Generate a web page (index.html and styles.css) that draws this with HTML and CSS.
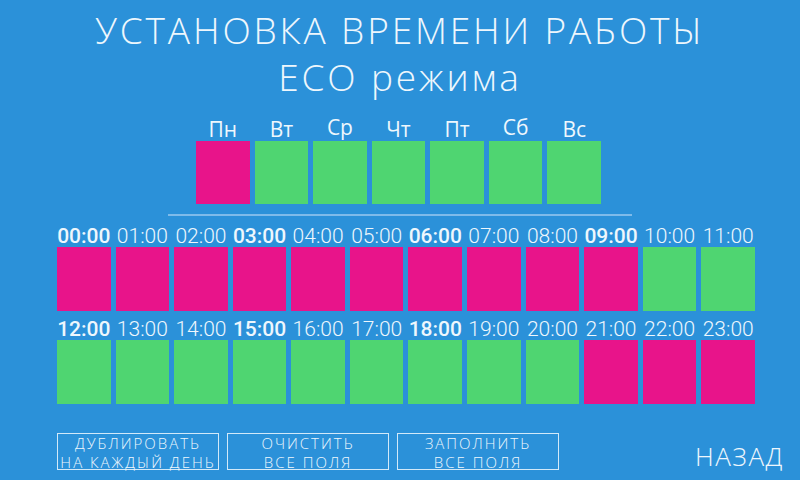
FILE: index.html
```html
<!DOCTYPE html>
<html lang="ru">
  <head>
    <meta charset="UTF-8" />
    <meta name="viewport" content="width=device-width, initial-scale=1.0" />
    <title>ECO режим</title>
    <link rel="stylesheet" href="styles.css">
  </head>
  <body>
    <div class="screen">
      <h1 class="title">
        <span>УСТАНОВКА ВРЕМЕНИ РАБОТЫ</span>
        <span>ECO режима</span>
      </h1>

      <div class="days">
        <div class="day"><span class="dayName">Пн</span><div class="cell off"></div></div>
        <div class="day"><span class="dayName">Вт</span><div class="cell on"></div></div>
        <div class="day"><span class="dayName up">Ср</span><div class="cell on"></div></div>
        <div class="day"><span class="dayName">Чт</span><div class="cell on"></div></div>
        <div class="day"><span class="dayName">Пт</span><div class="cell on"></div></div>
        <div class="day"><span class="dayName up">Сб</span><div class="cell on"></div></div>
        <div class="day"><span class="dayName">Вс</span><div class="cell on"></div></div>
      </div>

      <div class="divider"></div>

      <div class="hours" id="hours"></div>

      <div class="actions">
        <button class="btn">ДУБЛИРОВАТЬ<br>НА КАЖДЫЙ ДЕНЬ</button>
        <button class="btn">ОЧИСТИТЬ<br>ВСЕ ПОЛЯ</button>
        <button class="btn">ЗАПОЛНИТЬ<br>ВСЕ ПОЛЯ</button>
        <button class="back">НАЗАД</button>
      </div>
    </div>

    <script>
      let hours = document.getElementById("hours");
      // 1 = работает (зелёный), 0 = выключено
      let state = [0,0,0,0,0,0,0,0,0,0,1,1, 1,1,1,1,1,1,1,1,1,0,0,0];

      for (let row = 0; row < 2; row++) {
        let grid = document.createElement("div");
        grid.className = "hourRow";
        let labels = "";
        let cells = "";
        for (let i = 0; i < 12; i++) {
          let h = row * 12 + i;
          let txt = (h < 10 ? "0" : "") + h + ":00";
          let cls = h % 3 == 0 && h <= 18 ? "hourName bold" : "hourName";
          labels += '<span class="' + cls + '">' + txt + "</span>";
          cells += '<div class="cell ' + (state[h] ? "on" : "off") + '"></div>';
        }
        grid.innerHTML = labels + cells;
        hours.appendChild(grid);
      }
    </script>
  </body>
</html>
```

FILE: styles.css
```css
body {
  margin: 0;
  background: #2b91d9;
  color: #eef7fd;
  font-family: "Open Sans", sans-serif;
}

.screen {
  width: 800px;
  height: 480px;
  overflow: hidden;
}

.title {
  margin: 6px 0 0;
  font-size: 37px;
  font-weight: 300;
  line-height: 47px;
  letter-spacing: 2.85px;
  text-align: center;
}
.title span {
  display: block;
}

.days {
  display: grid;
  grid-template-columns: repeat(7, 1fr);
  column-gap: 5px;
  width: 405px;
  margin: 17px 0 0 196px;
}
.day {
  display: flex;
  flex-direction: column;
  align-items: center;
}
.dayName {
  height: 24px;
  font-size: 21px;
  line-height: 24px;
}
.dayName.up {
  margin-top: -2px;
  margin-bottom: 2px;
}
.days .cell {
  width: 100%;
  height: 63px;
}

.cell.on {
  background: #4fd571;
}
.cell.off {
  background: #e8148a;
}

.divider {
  width: 464px;
  height: 2px;
  margin: 10px 0 0 168px;
  background: #7ebbea;
}

.hours {
  width: 698px;
  margin: 10px 0 0 57px;
}
.hourRow {
  display: grid;
  grid-template-columns: repeat(12, 1fr);
  column-gap: 5px;
  grid-template-rows: 21px 64px;
}
.hourRow + .hourRow {
  margin-top: 8px;
}
.hourName {
  font-family: Roboto, sans-serif;
  font-size: 21px;
  font-weight: 300;
  line-height: 21px;
  text-align: center;
  white-space: nowrap;
}
.hourName.bold {
  font-weight: 500;
}

.actions {
  display: flex;
  align-items: flex-start;
  gap: 8px;
  margin: 29px 0 0 57px;
}
.btn {
  width: 162px;
  height: 37px;
  padding: 0;
  border: 1.5px solid #d2e9f9;
  background: transparent;
  color: #eef7fd;
  font-family: "Open Sans", sans-serif;
  font-size: 15px;
  font-weight: 300;
  line-height: 19px;
  letter-spacing: 2px;
  white-space: nowrap;
  cursor: pointer;
}
.back {
  margin: 8px 16px 0 auto;
  padding: 0;
  border: 0;
  background: transparent;
  color: #eef7fd;
  font-family: "Open Sans", sans-serif;
  font-size: 26px;
  font-weight: 300;
  line-height: 30px;
  letter-spacing: 1.5px;
  cursor: pointer;
}
```
